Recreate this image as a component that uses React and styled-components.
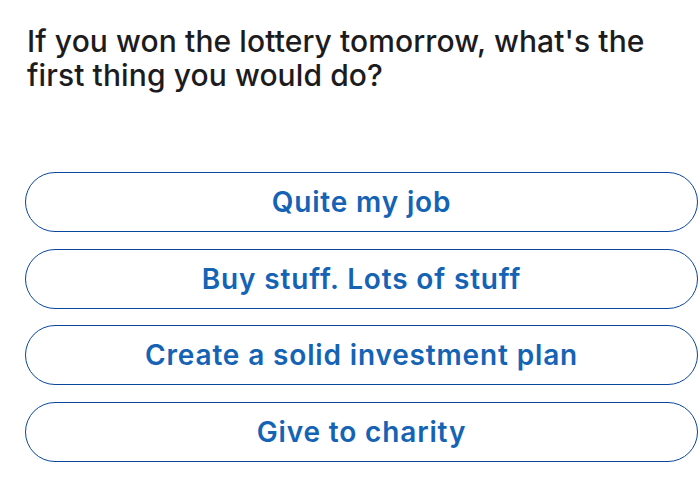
import React from "react";
import styled, { createGlobalStyle } from "styled-components";

const Global = createGlobalStyle`
  html, body { margin: 0; padding: 0; background: #ffffff; }
  body { font-family: Inter, "Noto Sans", "Liberation Sans", sans-serif; overflow: hidden; }
`;

const Page = styled.div`
  width: 700px;
  height: 487px;
  box-sizing: border-box;
  padding: 24px 0 0 25px;
  display: flex;
  flex-direction: column;
  overflow: hidden;
`;

const Question = styled.h1`
  margin: 0 0 80px 2px;
  font-size: 30px;
  line-height: 34px;
  font-weight: 500;
  color: #1c1c1e;
  letter-spacing: 0.1px;
`;

const Options = styled.div`
  display: flex;
  flex-direction: column;
  gap: 16.5px;
  width: 673px;
`;

const Option = styled.button`
  height: 60px;
  box-sizing: border-box;
  border: 1.6px solid #08479c;
  border-radius: 30px;
  background: #ffffff;
  color: #1463b5;
  font-family: inherit;
  font-size: 28px;
  font-weight: 600;
  letter-spacing: 0.85px;
  padding: 0;
  display: flex;
  align-items: center;
  justify-content: center;
`;

const answers = [
  "Quite my job",
  "Buy stuff. Lots of stuff",
  "Create a solid investment plan",
  "Give to charity",
];

export default function App() {
  return (
    <>
      <Global />
      <Page>
        <Question>
          If you won the lottery tomorrow, what's the
          <br />
          first thing you would do?
        </Question>
        <Options>
          {answers.map((a) => (
            <Option key={a}>{a}</Option>
          ))}
        </Options>
      </Page>
    </>
  );
}
